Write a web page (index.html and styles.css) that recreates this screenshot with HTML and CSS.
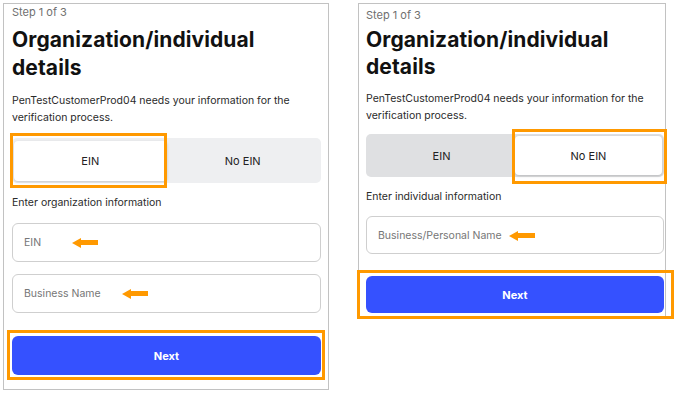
FILE: index.html
```html
<!DOCTYPE html>
<html lang="en">
<head>
<meta charset="utf-8">
<title>Organization/individual details</title>
<link rel="stylesheet" href="styles.css">
</head>
<body>
<div class="page">
  <section class="panel panel-left">
    <div class="step">Step 1 of 3</div>
    <h1 class="title">Organization/individual details</h1>
    <p class="desc">PenTestCustomerProd04 needs your information for the verification process.</p>
    <div class="toggle">
      <div class="tab tab-active">EIN</div>
      <div class="tab">No EIN</div>
    </div>
    <div class="label">Enter organization information</div>
    <div class="fields">
      <div class="field">EIN</div>
      <div class="field">Business Name</div>
    </div>
    <div class="btn">Next</div>

    <div class="mark mark-left-tab"></div>
    <div class="mark mark-left-next"></div>
    <div class="arrow arrow-ein"><span class="head"></span><span class="shaft"></span></div>
    <div class="arrow arrow-bn"><span class="head"></span><span class="shaft"></span></div>
  </section>

  <section class="panel panel-right">
    <div class="step">Step 1 of 3</div>
    <h1 class="title">Organization/individual details</h1>
    <p class="desc">PenTestCustomerProd04 needs your information for the verification process.</p>
    <div class="toggle toggle-dark">
      <div class="tab">EIN</div>
      <div class="tab tab-active">No EIN</div>
    </div>
    <div class="label">Enter individual information</div>
    <div class="fields">
      <div class="field">Business/Personal Name</div>
    </div>
    <div class="btn">Next</div>

    <div class="mark mark-right-tab"></div>
    <div class="mark mark-right-next"></div>
    <div class="arrow arrow-bpn"><span class="head"></span><span class="shaft"></span></div>
  </section>
</div>
</body>
</html>
```

FILE: styles.css
```css
* { box-sizing: border-box; }

html, body {
  margin: 0;
  padding: 0;
  background: #ffffff;
}

body {
  font-family: Inter, "Noto Sans", "Liberation Sans", sans-serif;
  color: #2a2a2a;
}

.page {
  display: flex;
  align-items: flex-start;
  padding: 3px 0 0 3px;
  gap: 29px;
}

.panel {
  position: relative;
  border: 1px solid #c2c2c2;
  background: #fff;
  display: flex;
  flex-direction: column;
}

.panel-left {
  width: 326px;
  height: 387px;
  padding: 1px 7px 0 8px;
}

.panel-right {
  width: 308px;
  height: 316px;
  padding: 4px 1px 0 7px;
}

.step {
  font-size: 11px;
  line-height: 14px;
  color: #6f6f6f;
}

.title {
  margin: 7px 0 0;
  font-size: 21px;
  line-height: 28px;
  font-weight: 700;
  color: #111;
  letter-spacing: 0.1px;
}

.panel-right .title {
  margin-top: 4px;
  line-height: 27px;
}

.desc {
  margin: 10px 0 0;
  font-size: 10.5px;
  line-height: 17px;
  color: #2a2a2a;
}

.panel-right .desc {
  margin-top: 10px;
}

.toggle {
  margin-top: 12px;
  display: grid;
  grid-template-columns: 1fr 1fr;
  height: 45px;
  padding: 3px 2px 2px;
  background: #eeeff1;
  border-radius: 5px;
}

.panel-right .toggle {
  margin-top: 10px;
  height: 43px;
  padding: 2px 2px 2px;
}

.toggle-dark {
  background: #dfe0e2;
}

.tab {
  display: flex;
  align-items: center;
  justify-content: center;
  font-size: 11px;
  color: #222;
  border-radius: 4px;
}

.tab-active {
  background: #fff;
  box-shadow: 0 1px 3px rgba(0, 0, 0, 0.18);
}

.label {
  margin-top: 13px;
  font-size: 10.5px;
  line-height: 14px;
  color: #2a2a2a;
}

.panel-right .label {
  margin-top: 13px;
}

.fields {
  margin-top: 13px;
  display: flex;
  flex-direction: column;
  gap: 12px;
}

.panel-right .fields {
  margin-top: 12px;
}

.field {
  height: 39px;
  border: 1px solid #cfcfcf;
  border-radius: 6px;
  padding-left: 11px;
  display: flex;
  align-items: center;
  font-size: 10.5px;
  color: #767676;
}

.panel-right .field {
  height: 38px;
}

.btn {
  margin-top: 23px;
  height: 39px;
  border-radius: 6px;
  background: #3551ff;
  color: #fff;
  font-size: 11px;
  font-weight: 700;
  display: flex;
  align-items: center;
  justify-content: center;
}

.panel-right .btn {
  margin-top: 22px;
  height: 37px;
}

/* annotation overlays */
.mark {
  position: absolute;
  border: 3px solid #ff9900;
}

.mark-left-tab { left: 6px; top: 129px; width: 157px; height: 55px; }
.mark-left-next { left: 3px; top: 326px; width: 318px; height: 50px; }
.mark-right-tab { left: 153px; top: 125px; width: 155px; height: 55px; }
.mark-right-next { left: -2px; top: 266px; width: 317px; height: 49px; }

.arrow {
  position: absolute;
  display: flex;
  align-items: center;
  height: 11px;
}

.arrow .head {
  width: 0;
  height: 0;
  border-top: 5.5px solid transparent;
  border-bottom: 5.5px solid transparent;
  border-right: 9px solid #ff9900;
}

.arrow .shaft {
  width: 17px;
  height: 5px;
  background: #ff9900;
}

.arrow-ein { left: 68px; top: 233px; }
.arrow-bn { left: 118px; top: 284px; }
.arrow-bpn { left: 150px; top: 226px; }
```
